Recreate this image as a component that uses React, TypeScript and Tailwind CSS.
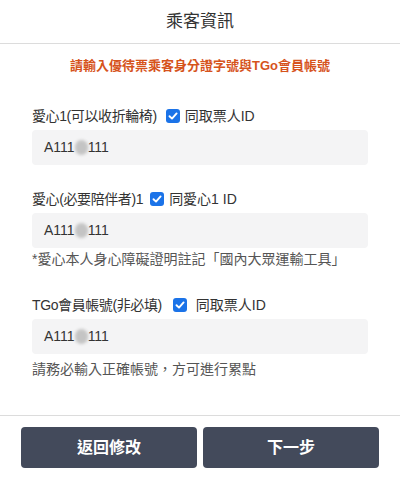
const FONT = { fontFamily: '"Liberation Sans", "Noto Sans CJK TC", sans-serif' };

function Check() {
  return (
    <svg width="14" height="14" viewBox="0 0 14 14" className="shrink-0">
      <rect width="14" height="14" rx="3" fill="#1b73e8" />
      <path d="M3.5 7.2 L6 9.6 L10.6 4.4" fill="none" stroke="#fff" strokeWidth="1.9" strokeLinecap="round" strokeLinejoin="round" />
    </svg>
  );
}

function IdValue() {
  return (
    <span className="flex items-center">
      A111
      <span className="inline-block h-[15px] w-[13px] rounded-full bg-[#c4c4c4] blur-[1.5px]" />
      111
    </span>
  );
}

function Field({
  label,
  check,
  gap,
  note,
  noteGap = "mt-[1px]",
}: {
  label: string;
  check: string;
  gap: string;
  note?: string;
  noteGap?: string;
}) {
  return (
    <div className="flex flex-col">
      <div className="flex h-[20px] items-center text-[14px] text-[#333]">
        <span className="tracking-[-0.4px]">{label}</span>
        <span className={`flex items-center ${gap}`}>
          <Check />
          <span>{check}</span>
        </span>
      </div>
      <div className="mt-[4px] flex h-[35px] items-center rounded-[4px] bg-[#f4f4f5] px-3 text-[14px] text-[#333]">
        <IdValue />
      </div>
      {note ? <p className={`${noteGap} text-[14px] leading-5 text-[#555]`}>{note}</p> : null}
    </div>
  );
}

export default function App() {
  return (
    <main className="flex h-[480px] w-[400px] flex-col bg-white" style={FONT}>
      <header className="flex h-[44px] items-center justify-center border-b border-[#dcdcdc] text-[17px] text-[#333]">
        乘客資訊
      </header>
      <p className="mt-[12px] text-center text-[13px] font-bold leading-[19px] text-[#d6531c]">
        請輸入優待票乘客身分證字號與TGo會員帳號
      </p>

      <div className="flex flex-1 flex-col px-8 pt-[31px]">
        <Field label="愛心1(可以收折輪椅)" check="同取票人ID" gap="ml-[9px] gap-[5px]" />
        <div className="h-[24px]" />
        <Field
          label="愛心(必要陪伴者)1"
          check="同愛心1 ID"
          gap="ml-[7px] gap-[5px]"
          note="*愛心本人身心障礙證明註記「國內大眾運輸工具」"
        />
        <div className="h-[26px]" />
        <Field
          label="TGo會員帳號(非必填)"
          check="同取票人ID"
          gap="ml-[11px] gap-[9px]"
          note="請務必輸入正確帳號，方可進行累點"
          noteGap="mt-[5px]"
        />
      </div>

      <footer className="flex gap-[6px] border-t border-[#dcdcdc] px-[21px] pb-[12px] pt-[11px]">
        <button type="button" className="h-[41px] flex-1 rounded-[4px] bg-[#434a5b] text-[16px] font-bold text-white">
          返回修改
        </button>
        <button type="button" className="h-[41px] flex-1 rounded-[4px] bg-[#434a5b] text-[16px] font-bold text-white">
          下一步
        </button>
      </footer>
    </main>
  );
}
